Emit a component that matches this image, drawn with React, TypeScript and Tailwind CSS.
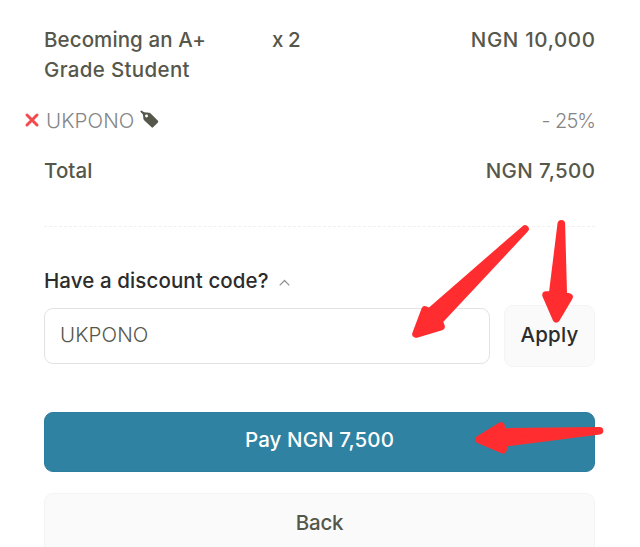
import React from 'react';

function Arrows() {
  return (
    <svg
      className="pointer-events-none absolute left-0 top-0"
      width="640"
      height="547"
      viewBox="0 0 640 547"
      fill="#ff2d2f"
      stroke="#ff2d2f"
      strokeWidth="7.6"
      strokeLinejoin="round"
    >
      <path d="M525 229 L429.5 312 L425 310 L416 334 L441 326.5 L439 321 Z" />
      <path d="M561.3 223.7 L552.5 295 L546 295 L556.3 318.7 L569 297 L563.3 296 Z" />
      <path d="M599.5 430.7 L502 432 L501 426 L479 439.5 L503 449.7 L503.5 443 Z" />
    </svg>
  );
}

export default function App() {
  return (
    <main className="relative h-[547px] w-[640px] overflow-hidden bg-white pl-11 pr-[45px] pt-[25px] font-['Inter',sans-serif] text-[20.5px] font-medium leading-[30px] text-[#56574b]">
      <div className="flex h-[60px] whitespace-nowrap">
        <div className="w-[228px]">
          <div className="tracking-[0.1px]">Becoming an A+</div>
          <div className="tracking-[0.33px]">Grade Student</div>
        </div>
        <div className="tracking-[-0.4px]">x 2</div>
        <div className="-mr-[0.6px] ml-auto tracking-[0.65px]">NGN 10,000</div>
      </div>

      <div className="-ml-5 mt-[20px] flex h-[30px] items-center font-light text-[#858585]">
        <svg width="16" height="16" viewBox="0 0 16 16" stroke="#f4494d" strokeWidth="3" strokeLinecap="round">
          <path d="M3 3 L13 13 M13 3 L3 13" />
        </svg>
        <span className="ml-[6px] w-[89px] pt-px tracking-[0.1px]">UKPONO</span>
        <svg className="-mt-px ml-[5px]" width="19" height="19" viewBox="0 0 18 18">
          <path
            fill="#56574b"
            fillRule="evenodd"
            d="M1.2 0.4 L4 2.2 L8.8 2.5 Q9.5 2.6 10.1 3.2 L17 10.3 Q17.7 11.1 17 11.8 L12.4 16.4 Q11.7 17.1 11 16.4 L3.9 9.7 Q3.3 9.1 3.2 8.4 L2.8 4.2 L0.2 1.5 Z M6.2 4.3 a1.4 1.4 0 1 0 0 2.8 a1.4 1.4 0 1 0 0 -2.8 Z"
          />
        </svg>
        <span className="ml-auto pt-px text-[20px] tracking-[-1px] [word-spacing:1px]">- 25%</span>
      </div>

      <div className="mt-[21px] flex h-[30px] justify-between">
        <span className="tracking-[0.1px]">Total</span>
        <span className="-mr-[0.4px] tracking-[0.4px]">NGN 7,500</span>
      </div>

      <div className="mt-[40px] border-t border-dashed border-[#f0f0f0]" />

      <div className="mt-[39px] flex h-[30px] items-center text-[#2c2c2c]">
        <span className="w-[225px] whitespace-nowrap tracking-[0.1px]">Have a discount code?</span>
        <svg className="ml-[9px] mt-1" width="13" height="10" viewBox="0 0 13 10" fill="none" stroke="#929292" strokeWidth="1.3">
          <path d="M1.7 7.4 L6.5 2.5 L11.3 7.4" />
        </svg>
      </div>

      <div className="mt-[9px] flex h-[62px] items-center justify-between">
        <input
          className="h-14 w-[446px] rounded-[9px] border border-[#e2e2e2] bg-white px-[15px] pb-[3px] font-light tracking-[0.1px] text-[#56574b] outline-none"
          defaultValue="UKPONO"
        />
        <button className="h-[62px] w-[91px] rounded-[9px] border border-[#f4f4f4] bg-[#fafafa] pb-[3px] font-medium tracking-[0.2px] text-[#2c2c2c]">
          Apply
        </button>
      </div>

      <button className="mt-[45px] block h-[60px] w-full rounded-[9px] border border-[#2b7e9f] bg-[#2f82a1] pb-[5px] font-medium tracking-[0.1px] text-white">
        Pay NGN 7,500
      </button>
      <button className="mt-[21px] block h-[60px] w-full rounded-[9px] border border-[#f4f4f4] bg-[#fafafa] font-medium tracking-[-0.2px]">
        Back
      </button>
      <Arrows />
    </main>
  );
}
